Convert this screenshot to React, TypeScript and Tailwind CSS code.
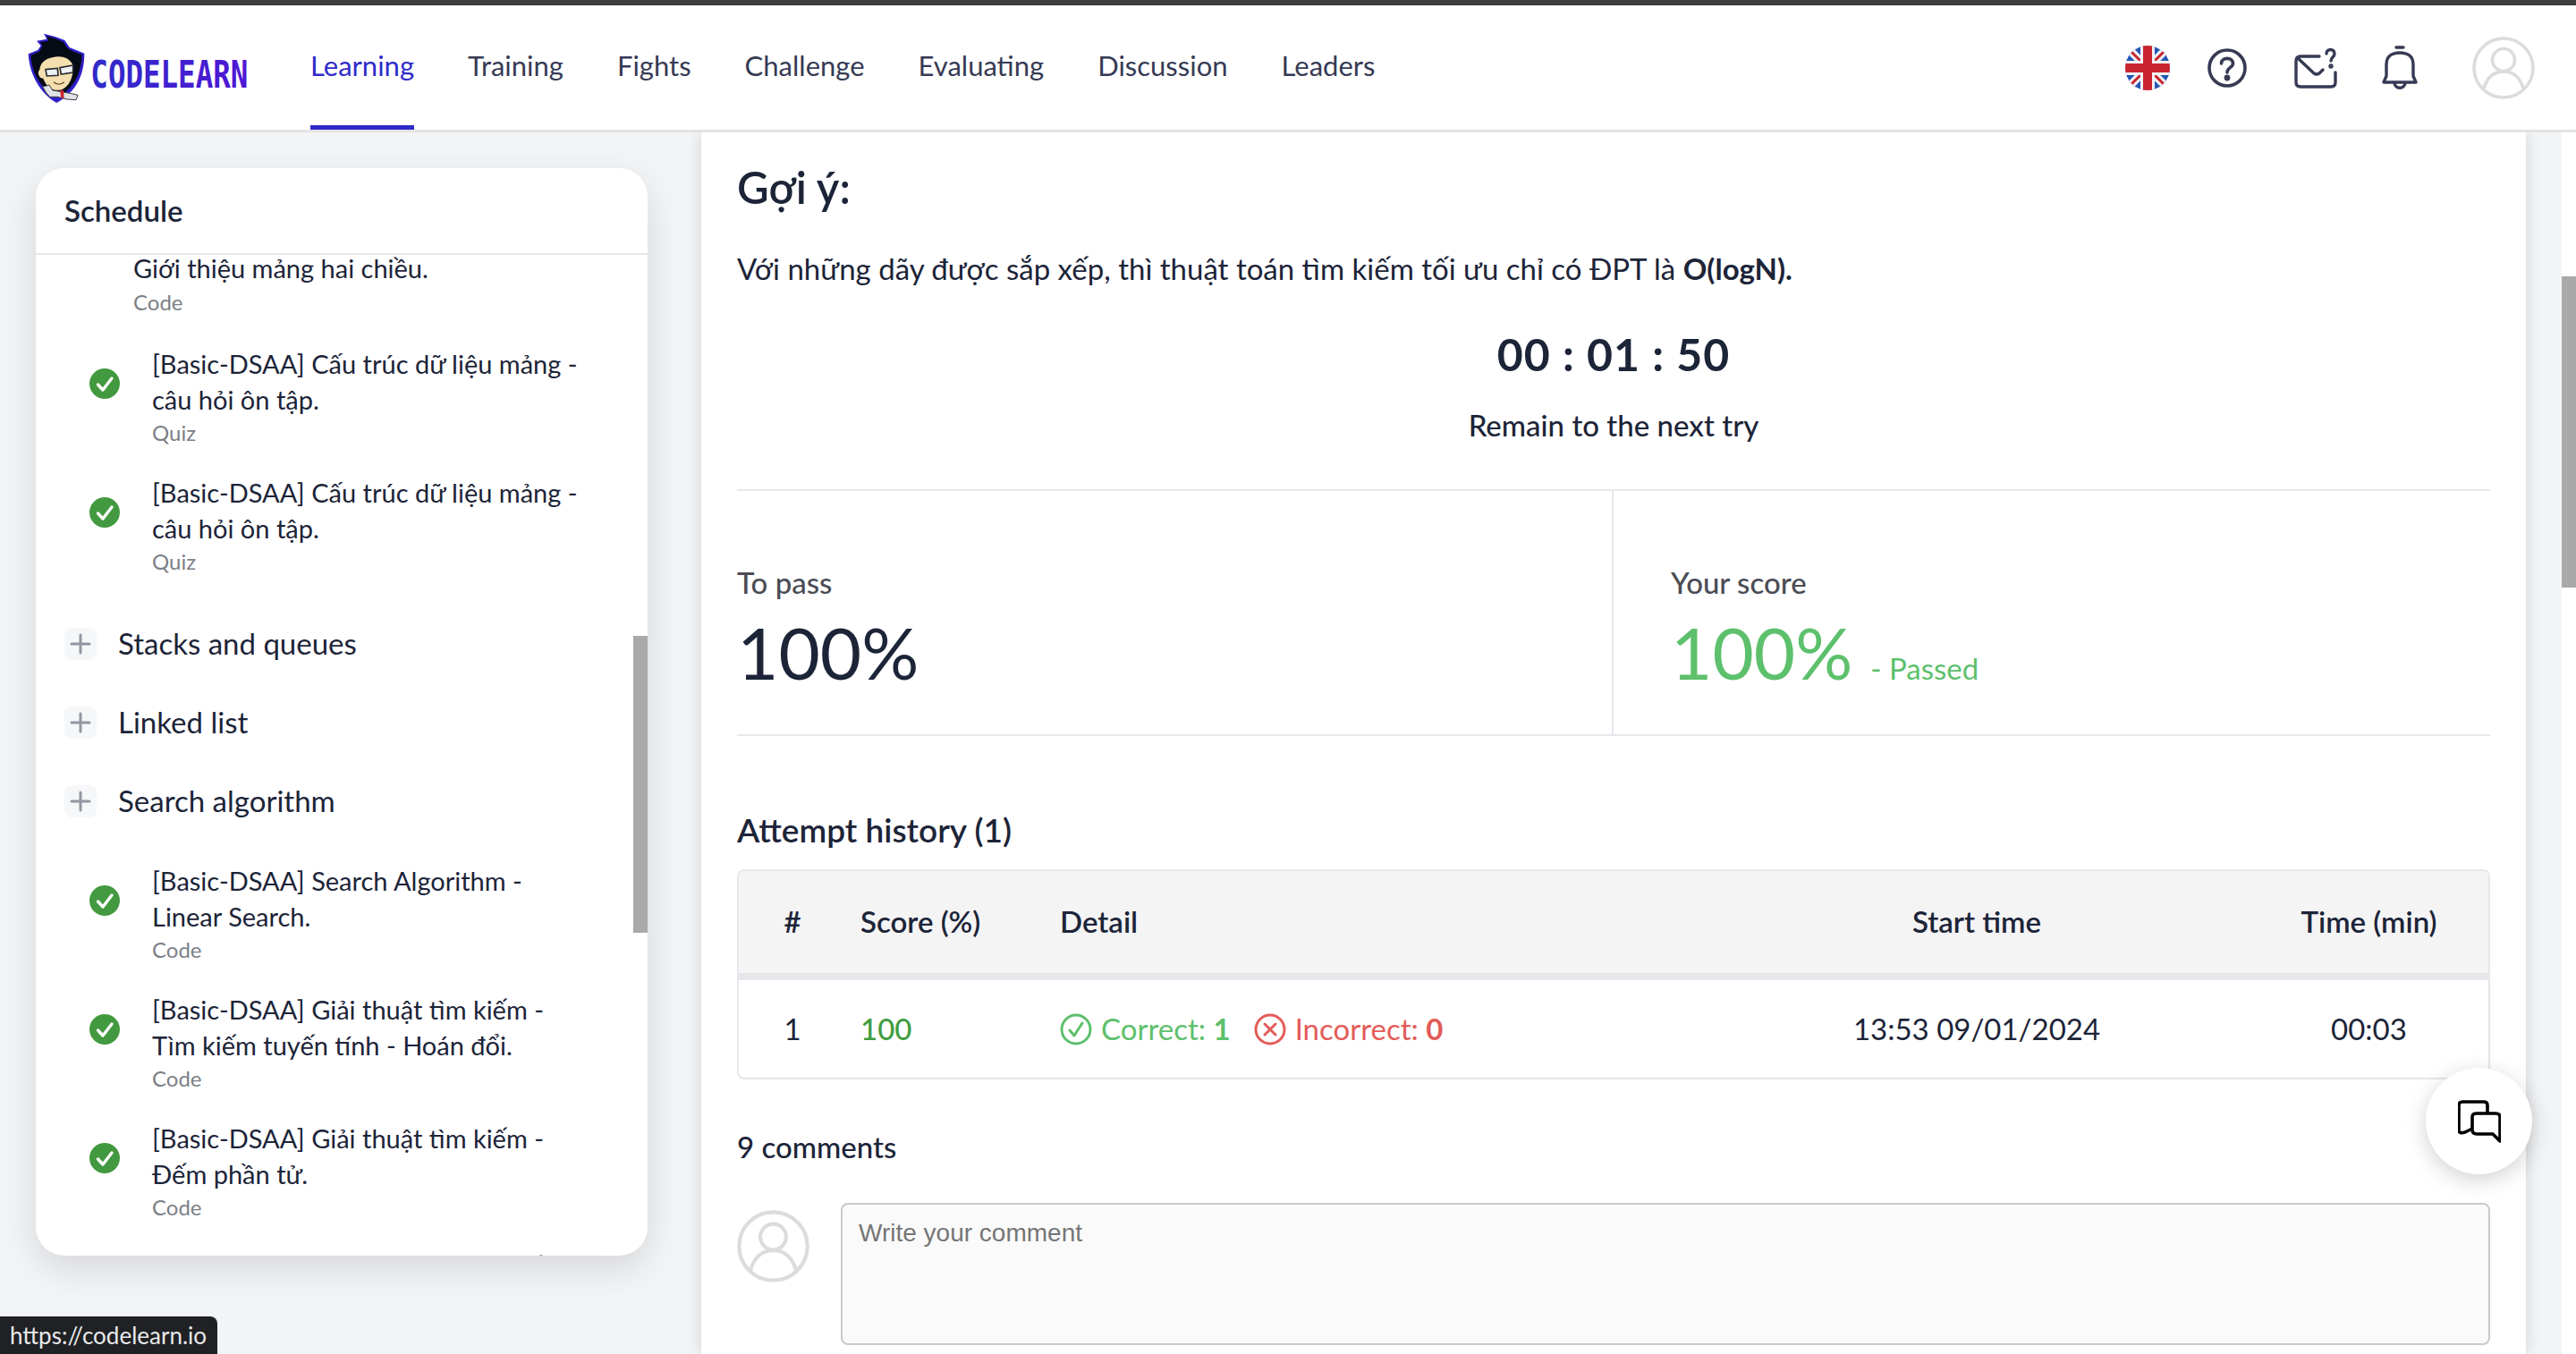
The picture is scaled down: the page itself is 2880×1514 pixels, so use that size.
import React from "react";

const ink = "#1c2438";

function Logo() {
  return (
    <svg width="270" height="110" viewBox="0 0 800 330" className="shrink-0">
      <defs>
        <linearGradient id="lg" x1="0" x2="1" y1="0" y2="0">
          <stop offset="0" stopColor="#2f2bc9" />
          <stop offset="1" stopColor="#4f17d6" />
        </linearGradient>
      </defs>
      <path d="M30 118 L62 105 L72 90 L58 74 L92 68 L82 50 L120 60 L152 72 L168 96 L192 106 L218 116 C218 190 190 245 125 282 C72 252 34 190 30 118Z" fill="#2f1fc9" />
      <path d="M38 122 L66 110 L78 90 L68 78 L98 74 L92 58 L120 66 L148 78 L162 100 L186 112 L210 120 C208 180 184 236 128 262 C76 240 42 186 38 122Z" fill="#070b16" />
      <path d="M68 170 C70 150 85 135 110 130 C140 122 165 130 178 152 C184 180 175 220 145 236 C115 248 90 228 80 200 C66 200 58 180 68 170Z" fill="#f4dfae" />
      <path d="M88 170 L128 166 L130 190 L92 192Z M136 164 L180 156 L180 180 L140 186Z" fill="#eef1f4" stroke="#2b2b33" strokeWidth="5" />
      <path d="M115 212 C125 222 140 222 150 212" fill="none" stroke="#6a4a2a" strokeWidth="4" />
      <path d="M78 228 L100 222 L112 240 L170 250 L196 256 L190 272 L160 270 L128 262 L102 262 L90 248Z" fill="#dfe3e6" stroke="#3b3b45" strokeWidth="3" />
      <path d="M136 240 L148 240 L150 266 L140 266Z" fill="#c9252f" />
      <text x="239" y="232" fontFamily="'DejaVu Sans Mono', monospace" fontWeight="700" fontSize="126" textLength="528" lengthAdjust="spacingAndGlyphs" fill="url(#lg)">CODELEARN</text>
    </svg>
  );
}

function Flag() {
  return (
    <svg width="50" height="50" viewBox="0 0 50 50">
      <defs><clipPath id="fc"><circle cx="25" cy="25" r="25" /></clipPath></defs>
      <g clipPath="url(#fc)">
        <rect width="50" height="50" fill="#2456b5" />
        <path d="M0 0 L50 50 M50 0 L0 50" stroke="#f1f1f4" strokeWidth="9" />
        <path d="M3 3 L21 21 M29 29 L47 47 M47 3 L29 21 M21 29 L3 47" stroke="#c8232f" strokeWidth="3" />
        <rect x="17" width="16" height="50" fill="#f1f1f4" />
        <rect y="17" width="50" height="16" fill="#f1f1f4" />
        <rect x="20" width="10" height="50" fill="#c8232f" />
        <rect y="20" width="50" height="10" fill="#c8232f" />
      </g>
    </svg>
  );
}

function Help() {
  return (
    <svg width="44" height="44" viewBox="0 0 44 44" fill="none" stroke="#363a54" strokeWidth="3.6" strokeLinecap="round">
      <circle cx="22" cy="22" r="20" />
      <path d="M15.5 17 C15.5 9.5 28.5 9.5 28.5 17 C28.5 21.5 22 21.5 22 27" />
      <circle cx="22" cy="33" r="1.6" fill="#363a54" />
    </svg>
  );
}

function Mail() {
  return (
    <svg width="48" height="46" viewBox="0 0 48 46" fill="none" stroke="#363a54" strokeWidth="3.4" strokeLinecap="round" strokeLinejoin="round">
      <path d="M28 10 H7 Q2 10 2 15 V39 Q2 44 7 44 H41 Q46 44 46 39 V28" />
      <path d="M4 12 L22 29 Q25 31 28 29 L32 25" />
      <path d="M36 7 C36 1 45 1 45 7 C45 11 41 11 41 15" />
      <circle cx="41" cy="21" r="1" fill="#363a54" />
    </svg>
  );
}

function Bell() {
  return (
    <svg width="40" height="50" viewBox="0 0 40 50" fill="none" stroke="#363a54" strokeWidth="3.4" strokeLinecap="round" strokeLinejoin="round">
      <path d="M16 2 H24" />
      <path d="M5 34 V21 C5 12 11 8 20 8 C29 8 35 12 35 21 V34 L38 41 H2Z" />
      <path d="M14 42 C15 49 25 49 26 42" />
    </svg>
  );
}

function Avatar({ size, color = "#dcdcdc" }: { size: number; color?: string }) {
  return (
    <svg width={size} height={size} viewBox="0 0 70 70" fill="none" stroke={color} strokeWidth="3.6">
      <circle cx="35" cy="35" r="33" />
      <circle cx="35" cy="26" r="12.5" />
      <path d="M13 58 C17 44 26 39 35 39 C44 39 53 44 57 58" />
    </svg>
  );
}

function Check() {
  return (
    <svg width="34" height="34" viewBox="0 0 34 34" className="shrink-0">
      <circle cx="17" cy="17" r="17" fill="#43993f" />
      <path d="M9.5 18 L15 24 L25 11" fill="none" stroke="#fff" strokeWidth="3.4" strokeLinecap="round" strokeLinejoin="round" />
    </svg>
  );
}

function Toggle({ open }: { open?: boolean }) {
  return (
    <span className="w-9 h-9 rounded-lg bg-[#f6f7f9] flex items-center justify-center shrink-0">
      <svg width="24" height="24" viewBox="0 0 24 24" stroke="#9197a0" strokeWidth="3" strokeLinecap="round">
        <path d="M2 12 H22" />
        {!open && <path d="M12 2 V22" />}
      </svg>
    </span>
  );
}

function Item({ a, b, kind }: { a: string; b: string; kind: string }) {
  return (
    <div className="flex items-start h-[144px] pl-[60px]">
      <span className="mt-[26px] mr-[36px]"><Check /></span>
      <div className="w-[510px] pt-[1px]">
        <p className="text-[29px] leading-[39.5px] text-[#1c2438]">{a}</p>
        <p className="text-[29px] leading-[39.5px] text-[#1c2438]">{b}</p>
        <p className="text-[24px] leading-[36px] text-[#7c7f86]">{kind}</p>
      </div>
    </div>
  );
}

function Group({ label, open }: { label: string; open?: boolean }) {
  return (
    <div className="flex items-center h-[88px] pl-[32px] gap-[24px]">
      <Toggle open={open} />
      <span className="text-[33px] text-[#1c2438]">{label}</span>
    </div>
  );
}

function Sidebar() {
  return (
    <div className="relative w-[684px] h-[1216px] mt-[40px] ml-[40px] bg-white rounded-[32px] overflow-hidden shadow-[0_14px_40px_rgba(0,0,0,0.12)]">
      <div className="h-[97px] border-b-2 border-[#e5e7eb] pl-[32px] flex items-center">
        <span className="text-[33px] font-semibold text-[#1c2438]">Schedule</span>
      </div>
      <div className="h-[1119px] overflow-hidden">
        <div className="pl-[109px] pt-[-2px]">
          <p className="text-[29px] leading-[30px] text-[#1c2438]">Giới thiệu mảng hai chiều.</p>
          <p className="text-[24px] leading-[36px] mt-[5px] text-[#7c7f86]">Code</p>
        </div>
        <div className="h-[30px]" />
        <Item a="[Basic-DSAA] Cấu trúc dữ liệu mảng -" b="câu hỏi ôn tập." kind="Quiz" />
        <Item a="[Basic-DSAA] Cấu trúc dữ liệu mảng -" b="câu hỏi ôn tập." kind="Quiz" />
        <div className="h-[2px]" />
        <Group label="Stacks and queues" />
        <Group label="Linked list" />
        <Group label="Search algorithm" />
        <div className="h-[24px]" />
        <Item a="[Basic-DSAA] Search Algorithm -" b="Linear Search." kind="Code" />
        <Item a="[Basic-DSAA] Giải thuật tìm kiếm -" b="Tìm kiếm tuyến tính - Hoán đổi." kind="Code" />
        <Item a="[Basic-DSAA] Giải thuật tìm kiếm -" b="Đếm phần tử." kind="Code" />
        <div className="pl-[169px]">
          <p className="text-[29px] leading-[39.5px] text-[#1c2438]">[Basic-DSAA] Giải thuật tìm kiếm -</p>
        </div>
      </div>
      <div className="absolute right-0 top-[523px] w-4 h-[332px] bg-[#a9a9a9]" />
    </div>
  );
}

function Main() {
  return (
    <div className="w-[2040px] h-full bg-white shadow-[0_0_16px_rgba(0,0,0,0.14)] px-[40px] overflow-hidden">
      <h1 className="text-[49px] font-semibold leading-[60px] mt-[31px] text-[#1c2438]">Gợi ý:</h1>
      <p className="text-[33px] leading-[44px] mt-[39px] text-[#1c2438]">
        Với những dãy được sắp xếp, thì thuật toán tìm kiếm tối ưu chỉ có ĐPT là <b className="font-bold">O(logN).</b>
      </p>
      <p className="text-center text-[50px] font-bold leading-[60px] mt-[44px] tracking-[1px] text-[#1c2438]">00 : 01 : 50</p>
      <p className="text-center text-[33px] font-medium leading-[44px] mt-[27px] text-[#1c2438]">Remain to the next try</p>
      <div className="grid grid-cols-2 mt-[50px] h-[276px] border-y-2 border-[#e5e7eb]">
        <div className="border-r-2 border-[#e5e7eb] pt-[80px]">
          <p className="text-[33px] font-medium leading-[44px] text-[#4b4c55]">To pass</p>
          <p className="text-[80px] leading-[90px] mt-[11px] text-[#1c2438]">100%</p>
        </div>
        <div className="pl-[64px] pt-[80px]">
          <p className="text-[33px] font-medium leading-[44px] text-[#4b4c55]">Your score</p>
          <p className="flex items-baseline mt-[11px] text-[#5dc06c]">
            <span className="text-[80px] leading-[90px]">100%</span>
            <span className="text-[33px] ml-[20px]">- Passed</span>
          </p>
        </div>
      </div>
      <h2 className="text-[37px] font-semibold leading-[48px] mt-[81px] text-[#1c2438]">Attempt history (1)</h2>
      <div className="relative mt-[20px] h-[235px] border-2 border-[#e5e7eb] rounded-lg overflow-hidden text-[33px] text-[#1c2438]">
        <div className="grid grid-cols-[120px_239px_720px_610px_1fr] items-center h-[122px] bg-[#f4f4f5] border-b-8 border-[#e5e7eb] font-semibold">
          <span className="text-center">#</span>
          <span className="pl-[16px]">Score (%)</span>
          <span>Detail</span>
          <span className="text-center">Start time</span>
          <span className="text-center">Time (min)</span>
        </div>
        <div className="grid grid-cols-[120px_239px_720px_610px_1fr] items-center h-[109px]">
          <span className="text-center">1</span>
          <span className="pl-[16px] font-medium text-[#3f9c3f]">100</span>
          <span className="flex items-center">
            <svg width="36" height="36" viewBox="0 0 36 36" fill="none" stroke="#5dc06c" strokeWidth="3" strokeLinecap="round" strokeLinejoin="round" className="shrink-0">
              <circle cx="18" cy="18" r="16" />
              <path d="M11 19 L16 25 L25 11" />
            </svg>
            <span className="ml-[10px] text-[#5dc06c]">Correct: <b className="font-bold">1</b></span>
            <svg width="36" height="36" viewBox="0 0 36 36" fill="none" stroke="#e35b58" strokeWidth="3" strokeLinecap="round" className="shrink-0 ml-[26px]">
              <circle cx="18" cy="18" r="16" />
              <path d="M12 12 L24 24 M24 12 L12 24" />
            </svg>
            <span className="ml-[10px] text-[#e35b58]">Incorrect: <b className="font-bold">0</b></span>
          </span>
          <span className="text-center">13:53 09/01/2024</span>
          <span className="text-center">00:03</span>
        </div>
      </div>
      <p className="text-[33px] font-medium leading-[44px] mt-[53px] text-[#1c2438]">9 comments</p>
      <div className="flex mt-[41px] items-start">
        <span className="mt-[8px]"><Avatar size={81} /></span>
        <div className="ml-[35px] flex-1 h-[159px] rounded-lg border-2 border-[#c9c9c9] bg-[#fafafa] px-[18px] pt-[14px] text-[28px] leading-[36px] text-[#757575] font-['Liberation_Sans',sans-serif]">
          Write your comment
        </div>
      </div>
    </div>
  );
}

export default function App() {
  const navs = ["Learning", "Training", "Fights", "Challenge", "Evaluating", "Discussion", "Leaders"];
  return (
    <div className="relative w-[2880px] h-[1514px] overflow-hidden bg-[#f3f4f6] font-['Lato',sans-serif] flex flex-col" style={{ color: ink }}>
      <div className="h-[6px] bg-[#3d3d3d] shrink-0" />
      <header className="h-[142px] shrink-0 bg-white border-b-[3px] border-[#e3e3e3] flex items-center relative z-10">
        <div className="ml-[20px] w-[297px] shrink-0"><Logo /></div>
        <nav className="flex h-full">
          {navs.map((n, i) => (
            <a key={n} className={`h-full mx-[30px] flex items-center border-b-[5px] pb-[5px] pt-[5px] -mb-[3px] text-[31px] ${i === 0 ? "border-[#2f2bc9] text-[#2f2bc9]" : "border-transparent text-[#363a54]"}`}>{n}</a>
          ))}
        </nav>
        <div className="ml-auto flex items-center pr-[46px]">
          <Flag />
          <span className="ml-[42px]"><Help /></span>
          <span className="ml-[53px]"><Mail /></span>
          <span className="ml-[50px]"><Bell /></span>
          <span className="ml-[61px]"><Avatar size={70} /></span>
        </div>
      </header>
      <div className="flex flex-1 min-h-0">
        <div className="w-[784px] shrink-0"><Sidebar /></div>
        <Main />
        <div className="w-[40px] shrink-0" />
        <div className="relative w-4 shrink-0 bg-white">
          <div className="absolute left-0 top-[161px] w-4 h-[348px] bg-[#a9a9a9]" />
        </div>
      </div>
      <button className="absolute left-[2712px] top-[1194px] w-[119px] h-[119px] rounded-full bg-white shadow-[0_6px_24px_rgba(0,0,0,0.18)] flex items-center justify-center">
        <svg width="48" height="48" viewBox="0 0 48 48" fill="none" stroke="#000" strokeWidth="3.6" strokeLinejoin="round">
          <path d="M16 32 L8 36 Q1 38 1 34 V6 Q1 2 5 2 H29 Q33 2 33 6 V15" />
          <path d="M21 15 H42 Q47 15 47 19 V46 L39 38 H21 Q16 38 16 33 V19 Q16 15 21 15Z" />
        </svg>
      </button>
      <div className="absolute left-0 bottom-0 w-[243px] h-[42px] bg-[#202124] rounded-tr-lg flex items-center pl-[11px] text-[26px] text-[#e8eaed]">https://codelearn.io</div>
    </div>
  );
}
